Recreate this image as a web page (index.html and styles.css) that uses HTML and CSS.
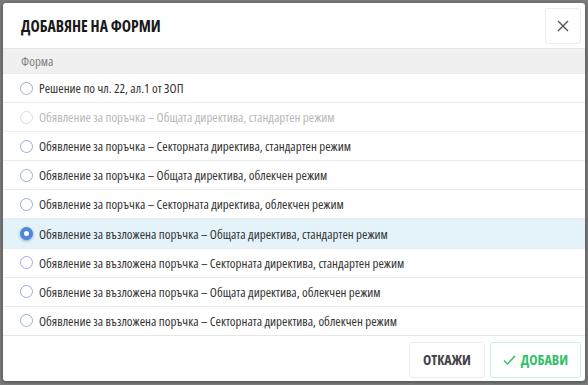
FILE: index.html
```html
<!DOCTYPE html>
<html lang="bg">
<head>
    <meta charset="UTF-8">
    <meta name="viewport" content="width=device-width, initial-scale=1.0">
    <title>Добавяне на форми</title>
    <link rel="stylesheet" href="styles.css">
</head>
<body>
    <div class="modal">
        <div class="modal-header">
            <h2>ДОБАВЯНЕ НА ФОРМИ</h2>
            <button class="close-button" aria-label="Затвори">
                <svg width="12" height="12" viewBox="0 0 12 12"><path d="M1 1L11 11M11 1L1 11" stroke="#555" stroke-width="1.4" fill="none"/></svg>
            </button>
        </div>
        <div class="table-head">Форма</div>
        <div class="rows">
            <label class="row"><span class="radio"></span>Решение по чл. 22, ал.1 от ЗОП</label>
            <label class="row disabled"><span class="radio"></span>Обявление за поръчка – Общата директива, стандартен режим</label>
            <label class="row"><span class="radio"></span>Обявление за поръчка – Секторната директива, стандартен режим</label>
            <label class="row"><span class="radio"></span>Обявление за поръчка – Общата директива, облекчен режим</label>
            <label class="row"><span class="radio"></span>Обявление за поръчка – Секторната директива, облекчен режим</label>
            <label class="row selected"><span class="radio"></span>Обявление за възложена поръчка – Общата директива, стандартен режим</label>
            <label class="row"><span class="radio"></span>Обявление за възложена поръчка – Секторната директива, стандартен режим</label>
            <label class="row"><span class="radio"></span>Обявление за възложена поръчка – Общата директива, облекчен режим</label>
            <label class="row"><span class="radio"></span>Обявление за възложена поръчка – Секторната директива, облекчен режим</label>
        </div>
        <div class="modal-footer">
            <button class="btn">ОТКАЖИ</button>
            <button class="btn btn-add">
                <svg width="13" height="10" viewBox="0 0 13 10"><path d="M1 5.5L4.5 9L12 1" stroke="#33c06b" stroke-width="1.5" fill="none"/></svg>
                ДОБАВИ
            </button>
        </div>
    </div>
</body>
</html>
```

FILE: styles.css
```css
body {
    margin: 0;
    padding: 3px;
    background-color: #7b7b7b;
    font-family: "Open Sans", sans-serif;
    font-stretch: 75%;
    color: #333;
}
.modal {
    width: 582px;
    height: 378px;
    background-color: white;
    border-radius: 3px;
    box-shadow: 0 1px 4px rgba(0,0,0,0.4);
    display: flex;
    flex-direction: column;
    overflow: hidden;
}
.modal-header {
    height: 45px;
    display: flex;
    align-items: center;
    justify-content: space-between;
    padding: 0 4px 0 18px;
    border-bottom: 1px solid #e6e6e6;
}
.modal-header h2 {
    margin: 0;
    font-size: 15.7px;
    font-weight: bold;
    color: #1a1a1a;
}
.close-button {
    width: 36px;
    height: 36px;
    background: white;
    border: 1px solid #ececec;
    border-radius: 3px;
    display: flex;
    align-items: center;
    justify-content: center;
    padding: 0;
}
.table-head {
    height: 24px;
    line-height: 24px;
    background-color: #f0f0f0;
    color: #808080;
    font-size: 13px;
    padding-left: 18px;
}
.rows {
    display: flex;
    flex-direction: column;
}
.row {
    height: 28.1px;
    border-top: 1px solid #ebebeb;
    display: flex;
    align-items: center;
    padding-left: 17px;
    font-size: 13px;
    color: #333;
}
.row.disabled {
    color: #b8b8b8;
}
.row.selected {
    background-color: #e4f3fa;
}
.radio {
    width: 11px;
    height: 11px;
    border: 1.5px solid #9aaee0;
    border-radius: 50%;
    margin-right: 6px;
    box-sizing: content-box;
}
.row.disabled .radio {
    border-color: #dcdcdc;
}
.row.selected .radio {
    width: 5px;
    height: 5px;
    border: 4.5px solid #4f86d9;
    background-color: white;
    box-shadow: 0 1px 3px rgba(40,80,160,0.5);
}
.modal-footer {
    flex: 1;
    border-top: 1px solid #e6e6e6;
    display: flex;
    justify-content: flex-end;
    align-items: flex-start;
    gap: 5px;
    padding: 6px 4px 0 0;
}
.btn {
    height: 36px;
    padding: 0 13px;
    background: white;
    border: 1px solid #ececec;
    border-radius: 3px;
    font-family: "Open Sans", sans-serif;
    font-stretch: 75%;
    font-size: 14px;
    font-weight: bold;
    color: #444;
    display: flex;
    align-items: center;
    gap: 5px;
}
.btn-add {
    color: #33c06b;
    border-color: #cdeed8;
    padding: 0 12px 0 12px;
}
```
